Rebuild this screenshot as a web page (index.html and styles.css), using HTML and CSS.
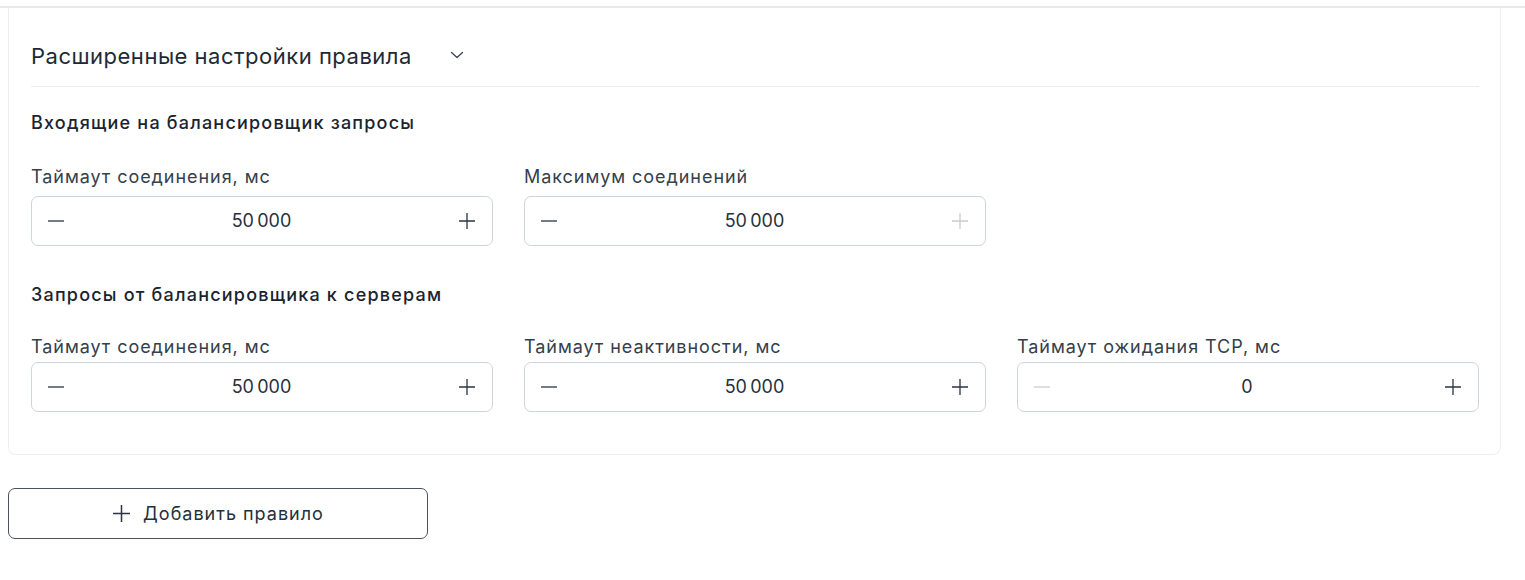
FILE: index.html
```html
<!DOCTYPE html>
<html lang="ru">
<head>
<meta charset="utf-8">
<title>Расширенные настройки правила</title>
<link rel="stylesheet" href="styles.css">
</head>
<body>
<div class="top-rule"></div>
<section class="card">
  <div class="card-header">
    <span class="card-title">Расширенные настройки правила</span>
    <svg class="chevron" width="14" height="8" viewBox="0 0 14 8" fill="none"><path d="M1.5 1.5 L7 6.5 L12.5 1.5" stroke="currentColor" stroke-width="1.3" stroke-linecap="round" stroke-linejoin="round"/></svg>
  </div>

  <div class="group group-in">
    <h3 class="group-title">Входящие на балансировщик запросы</h3>
    <div class="fields">
      <div class="field">
        <label class="field-label">Таймаут соединения, мс</label>
        <div class="stepper">
          <span class="step"><svg width="18" height="18" viewBox="0 0 18 18"><path d="M1 9h16" stroke="currentColor" stroke-width="1.3"/></svg></span>
          <span class="value">50&#8239;000</span>
          <span class="step"><svg width="18" height="18" viewBox="0 0 18 18"><path d="M1 9h16M9 1v16" stroke="currentColor" stroke-width="1.3"/></svg></span>
        </div>
      </div>
      <div class="field">
        <label class="field-label">Максимум соединений</label>
        <div class="stepper">
          <span class="step"><svg width="18" height="18" viewBox="0 0 18 18"><path d="M1 9h16" stroke="currentColor" stroke-width="1.3"/></svg></span>
          <span class="value">50&#8239;000</span>
          <span class="step disabled"><svg width="18" height="18" viewBox="0 0 18 18"><path d="M1 9h16M9 1v16" stroke="currentColor" stroke-width="1.3"/></svg></span>
        </div>
      </div>
    </div>
  </div>

  <div class="group group-out">
    <h3 class="group-title">Запросы от балансировщика к серверам</h3>
    <div class="fields">
      <div class="field">
        <label class="field-label">Таймаут соединения, мс</label>
        <div class="stepper">
          <span class="step"><svg width="18" height="18" viewBox="0 0 18 18"><path d="M1 9h16" stroke="currentColor" stroke-width="1.3"/></svg></span>
          <span class="value">50&#8239;000</span>
          <span class="step"><svg width="18" height="18" viewBox="0 0 18 18"><path d="M1 9h16M9 1v16" stroke="currentColor" stroke-width="1.3"/></svg></span>
        </div>
      </div>
      <div class="field">
        <label class="field-label">Таймаут неактивности, мс</label>
        <div class="stepper">
          <span class="step"><svg width="18" height="18" viewBox="0 0 18 18"><path d="M1 9h16" stroke="currentColor" stroke-width="1.3"/></svg></span>
          <span class="value">50&#8239;000</span>
          <span class="step"><svg width="18" height="18" viewBox="0 0 18 18"><path d="M1 9h16M9 1v16" stroke="currentColor" stroke-width="1.3"/></svg></span>
        </div>
      </div>
      <div class="field">
        <label class="field-label">Таймаут ожидания TCP, мс</label>
        <div class="stepper">
          <span class="step disabled"><svg width="18" height="18" viewBox="0 0 18 18"><path d="M1 9h16" stroke="currentColor" stroke-width="1.3"/></svg></span>
          <span class="value">0</span>
          <span class="step"><svg width="18" height="18" viewBox="0 0 18 18"><path d="M1 9h16M9 1v16" stroke="currentColor" stroke-width="1.3"/></svg></span>
        </div>
      </div>
    </div>
  </div>
</section>

<button class="add-btn" type="button">
  <svg width="19" height="19" viewBox="0 0 19 19"><path d="M1 9.5h17M9.5 1v17" stroke="currentColor" stroke-width="1.5"/></svg>
  <span>Добавить правило</span>
</button>
</body>
</html>
```

FILE: styles.css
```css
* { box-sizing: border-box; }

body {
  margin: 0;
  font-family: Inter, "Noto Sans", "Liberation Sans", sans-serif;
  color: #1d2833;
  background: #ffffff;
}

.top-rule {
  margin-top: 6px;
  height: 2px;
  background: #e7e9ec;
}

.card {
  margin: 0 24px 0 8px;
  border: 1px solid #eceff2;
  border-top: none;
  border-radius: 0 0 8px 8px;
  padding: 0 21px 42px 22px;
}

.card-header {
  display: flex;
  align-items: center;
  gap: 38px;
  padding: 34px 0 16px;
  border-bottom: 1px solid #eaeef2;
}

.card-title {
  font-size: 22px;
  line-height: 28px;
  font-weight: 400;
  color: #1d2a36;
  letter-spacing: 0.5px;
}

.chevron {
  color: #3a4653;
  margin-top: -3px;
}

.group-title {
  margin: 0;
  font-size: 18px;
  line-height: 24px;
  font-weight: 500;
  color: #1a242f;
  letter-spacing: 1.2px;
}

.group-in { padding-top: 24px; }
.group-out { padding-top: 37px; }

.fields {
  display: grid;
  grid-template-columns: repeat(3, 1fr);
  column-gap: 31px;
}

.field {
  display: flex;
  flex-direction: column;
}

.field-label {
  font-size: 18px;
  line-height: 24px;
  color: #34404c;
  letter-spacing: 0.95px;
}

.group-in .fields { padding-top: 30px; }
.group-in .field-label { margin-bottom: 7px; }

.group-out .fields { padding-top: 28px; }
.group-out .field-label { margin-bottom: 3px; }

.stepper {
  display: flex;
  align-items: center;
  height: 50px;
  border: 1px solid #cfd4d9;
  border-radius: 7px;
  padding: 0 16px 0 15px;
}

.step {
  display: flex;
  width: 18px;
  height: 18px;
  color: #2a3540;
}

.step.disabled { color: #c8cdd2; }

.value {
  flex: 1;
  text-align: center;
  font-size: 18px;
  line-height: 24px;
  color: #27313c;
  letter-spacing: 1.2px;
}

.add-btn {
  display: flex;
  align-items: center;
  justify-content: center;
  gap: 12px;
  margin: 33px 0 0 8px;
  width: 420px;
  height: 51px;
  background: #ffffff;
  border: 1px solid #48535f;
  border-radius: 7px;
  font-family: Inter, "Noto Sans", "Liberation Sans", sans-serif;
  font-size: 18px;
  letter-spacing: 1px;
  color: #24303b;
  padding: 0;
}

.add-btn svg { color: #2a3540; }
```
